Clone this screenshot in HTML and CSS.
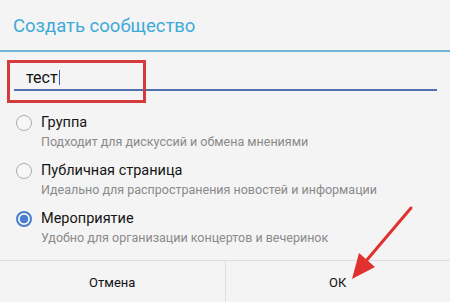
FILE: index.html
```html
<!DOCTYPE html>
<html lang="ru">
<head>
<meta charset="utf-8">
<title>Создать сообщество</title>
<link rel="stylesheet" href="styles.css">
</head>
<body>
<div class="dialog">
  <header class="title">Создать сообщество</header>
  <div class="field">
    <div class="input"><span class="value">тест</span><span class="caret"></span></div>
  </div>
  <ul class="options">
    <li class="option">
      <span class="radio"></span>
      <div class="texts">
        <div class="label">Группа</div>
        <div class="desc">Подходит для дискуссий и обмена мнениями</div>
      </div>
    </li>
    <li class="option">
      <span class="radio"></span>
      <div class="texts">
        <div class="label">Публичная страница</div>
        <div class="desc">Идеально для распространения новостей и информации</div>
      </div>
    </li>
    <li class="option">
      <span class="radio checked"></span>
      <div class="texts">
        <div class="label">Мероприятие</div>
        <div class="desc">Удобно для организации концертов и вечеринок</div>
      </div>
    </li>
  </ul>
  <div class="buttons">
    <button class="btn">Отмена</button>
    <button class="btn">ОК</button>
  </div>
  <div class="highlight"></div>
  <svg class="arrow" width="450" height="302" viewBox="0 0 450 302">
    <line x1="411" y1="208" x2="366" y2="261" stroke="#e0312f" stroke-width="3" stroke-linecap="round"/>
    <polygon points="352,279 359,253 375,267" fill="#e0312f"/>
  </svg>
</div>
</body>
</html>
```
FILE: styles.css
```css
* { box-sizing: border-box; }
html, body { margin: 0; padding: 0; }
body {
  width: 450px;
  height: 302px;
  background: #f4f4f4;
  font-family: Roboto, "Noto Sans", sans-serif;
  overflow: hidden;
}
.dialog {
  position: relative;
  width: 450px;
  height: 302px;
  display: flex;
  flex-direction: column;
}
.title {
  height: 52px;
  display: flex;
  align-items: center;
  padding-left: 13px;
  padding-top: 1px;
  font-size: 18.5px;
  color: #3eaad9;
  border-bottom: 2px solid #6db6d8;
}
.field {
  padding: 14px 13px 0 14px;
  height: 56px;
}
.input {
  height: 25px;
  border-bottom: 2px solid #4f6fad;
  display: flex;
  align-items: center;
  padding-left: 12px;
  padding-bottom: 1px;
  font-size: 16px;
  color: #111;
}
.caret {
  display: inline-block;
  width: 1px;
  height: 15px;
  margin-left: 1px;
  background: #3b5fb0;
}
.options {
  list-style: none;
  margin: 0;
  padding: 0;
}
.option {
  display: flex;
  align-items: flex-start;
  padding: 5px 0 6px 16px;
  gap: 9px;
}
.radio {
  flex: none;
  width: 16px;
  height: 16px;
  margin-top: 2px;
  border-radius: 50%;
  border: 1.5px solid #acacac;
  background: #f7f7f7;
}
.radio.checked {
  border: 2px solid #4a7fcc;
  background: radial-gradient(circle, #4a7fcc 0 4px, #f4f4f4 4.6px);
}
.label {
  font-size: 14.5px;
  line-height: 20px;
  color: #151515;
}
.desc {
  font-size: 12.5px;
  line-height: 17px;
  color: #8a8a8a;
}
.buttons {
  margin-top: auto;
  height: 42px;
  display: flex;
  border-top: 1px solid #dedede;
}
.btn {
  flex: 1;
  background: transparent;
  border: 0;
  font-family: Roboto, "Noto Sans", sans-serif;
  font-size: 13px;
  color: #111;
  padding: 2px 0 0;
}
.btn + .btn {
  border-left: 1px solid #dedede;
}
.highlight {
  position: absolute;
  left: 7px;
  top: 60px;
  width: 139px;
  height: 43px;
  border: 3.5px solid #d33b3e;
}
.arrow {
  position: absolute;
  left: 0;
  top: 0;
}
```
